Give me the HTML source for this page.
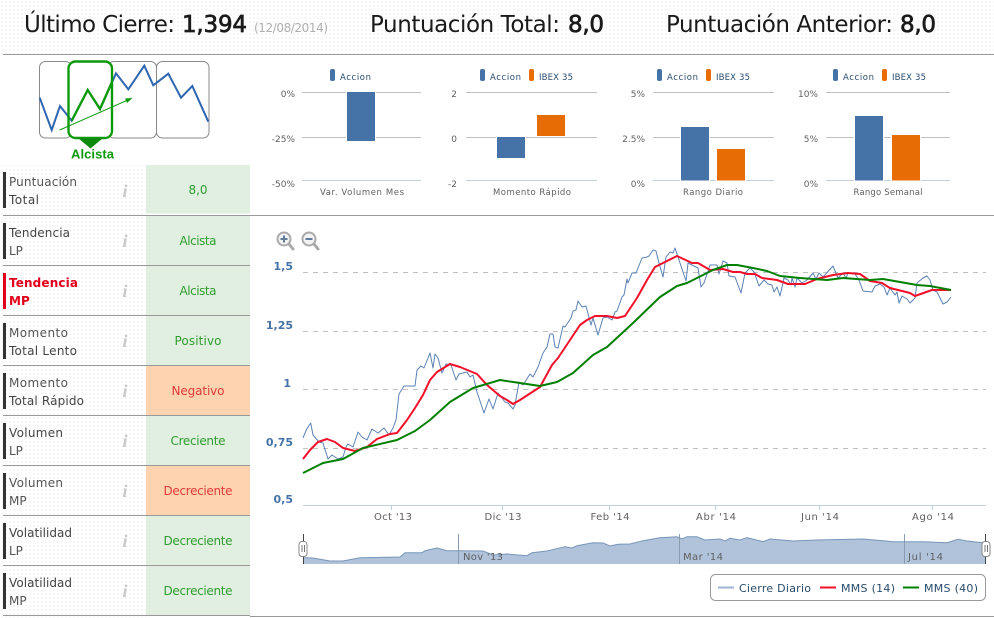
<!DOCTYPE html>
<html lang="es"><head><meta charset="utf-8"><title>Análisis</title>
<style>
html,body{margin:0;padding:0;background:#fff}
svg{display:block;font-family:"DejaVu Sans","Liberation Sans",sans-serif}
.h{font-size:23px;fill:#1a1a1a}
.hb{font-size:23px;fill:#1a1a1a;stroke:#1a1a1a;stroke-width:.7px}
.l{font-size:12px;fill:#555}
.ld{font-size:12px;fill:#444}
.v{font-size:12px;text-anchor:middle}
.g{fill:#2f9e2f}.r{fill:#e03a3a}
.i{font-family:"Liberation Serif",serif;font-style:italic;font-weight:bold;font-size:18px;fill:#c8c8c8;text-anchor:middle}
.ax{font-size:9px;fill:#606060;text-anchor:end}
.lg{font-size:8.5px;fill:#274b6d}
.t{font-size:8.5px;fill:#606060;text-anchor:middle}
.y{font-size:11px;font-weight:bold;fill:#4572a7;text-anchor:end}
.x{font-size:10px;fill:#606060;text-anchor:middle}
.n{font-size:10px;fill:#606060}
.lt{font-size:11px;fill:#274b6d}
.gl{stroke:#c0c0c0;stroke-width:1}
.ab{stroke:#c0d0e0;stroke-width:1}
.dg{stroke:#c0c0c0;stroke-width:1;stroke-dasharray:5 5}
.rl{stroke:#999;stroke-width:1}
</style></head>
<body>
<svg width="994" height="618" viewBox="0 0 994 618" xmlns="http://www.w3.org/2000/svg">
<defs>
<pattern id="d" width="4" height="4" patternUnits="userSpaceOnUse"><rect width="4" height="4" fill="#fff"/><rect x="1" y="1" width="2" height="2" fill="#f7f7f7"/></pattern>
</defs>
<rect width="994" height="618" fill="#fff"/>
<rect x="0" y="0" width="994" height="54" fill="url(#d)"/>
<rect x="0" y="165" width="146" height="453" fill="url(#d)"/>

<!-- header -->
<text x="24" y="32" class="h" textLength="151">Último Cierre:</text>
<text x="182" y="32" class="hb" textLength="65">1,394</text>
<text x="254" y="32" font-size="12" fill="#b0b0b0" textLength="74">(12/08/2014)</text>
<text x="370" y="32" class="h" textLength="190">Puntuación Total:</text>
<text x="568" y="32" class="hb" textLength="36">8,0</text>
<text x="666" y="32" class="h" textLength="227">Puntuación Anterior:</text>
<text x="900" y="32" class="hb" textLength="36">8,0</text>
<line x1="3" y1="54.5" x2="994" y2="54.5" class="rl"/>

<!-- mini trend -->
<g fill="#fff" stroke="#888" stroke-width="1">
<rect x="39.5" y="61.5" width="32" height="76.5" rx="6"/>
<rect x="108" y="61.5" width="48.5" height="76.5" rx="6"/>
<rect x="156.5" y="61.5" width="52.5" height="76.5" rx="6"/>
</g>
<rect x="68.5" y="61.5" width="43.5" height="76.5" rx="7" fill="#fff"/>
<polyline fill="none" stroke="#2f66b0" stroke-width="2" points="39.7,97.7 51.7,130 60,106 71.7,120.7 87.7,90 100,109 116,73.3 128.3,89.3 144.3,65.7 153.3,85.3 168.3,73.7 181,97.7 192.3,86 208.3,121.7"/>
<rect x="68.5" y="61.5" width="43.5" height="76.5" rx="7" fill="none" stroke="#0d9a0d" stroke-width="2.4"/>
<polyline fill="none" stroke="#0d9a0d" stroke-width="2.4" points="71.7,120.7 87.7,90 100,109 112,82"/>
<line x1="59.7" y1="130" x2="128" y2="100" stroke="#0d9a0d" stroke-width="1"/>
<polygon points="132.5,98 125,98.5 127,103" fill="#0d9a0d"/>
<polygon points="78,138 103,138 90.5,148.5" fill="#0d8a0d"/>
<text x="92.5" y="158.5" text-anchor="middle" font-family="Liberation Sans" font-weight="bold" font-size="13" fill="#0d9a0d" textLength="43">Alcista</text>

<!-- rows -->
<rect x="146" y="165" width="104" height="48.5" fill="#e0efe0"/>
<rect x="146" y="216" width="104" height="49" fill="#e0efe0"/>
<rect x="146" y="266" width="104" height="49" fill="#e0efe0"/>
<rect x="146" y="316" width="104" height="49" fill="#e0efe0"/>
<rect x="146" y="366" width="104" height="49" fill="#fdd3b0"/>
<rect x="146" y="416" width="104" height="49" fill="#e0efe0"/>
<rect x="146" y="466" width="104" height="49" fill="#fdd3b0"/>
<rect x="146" y="516" width="104" height="49" fill="#e0efe0"/>
<rect x="146" y="566" width="104" height="49" fill="#e0efe0"/>
<line x1="3" y1="215.5" x2="994" y2="215.5" class="rl"/>
<line x1="3" y1="265.5" x2="250" y2="265.5" class="rl"/>
<line x1="3" y1="315.5" x2="250" y2="315.5" class="rl"/>
<line x1="3" y1="365.5" x2="250" y2="365.5" class="rl"/>
<line x1="3" y1="415.5" x2="250" y2="415.5" class="rl"/>
<line x1="3" y1="465.5" x2="250" y2="465.5" class="rl"/>
<line x1="3" y1="515.5" x2="250" y2="515.5" class="rl"/>
<line x1="3" y1="565.5" x2="250" y2="565.5" class="rl"/>
<line x1="3" y1="615.5" x2="250" y2="615.5" class="rl"/>
<line x1="250" y1="616.5" x2="994" y2="616.5" class="rl"/>

<g fill="#333">
<rect x="3" y="172" width="3" height="36"/>
<rect x="3" y="223" width="3" height="36"/>
<rect x="3" y="273" width="3" height="36" fill="#e2001a"/>
<rect x="3" y="323" width="3" height="36"/>
<rect x="3" y="373" width="3" height="36"/>
<rect x="3" y="423" width="3" height="36"/>
<rect x="3" y="473" width="3" height="36"/>
<rect x="3" y="523" width="3" height="36"/>
<rect x="3" y="573" width="3" height="36"/>
</g>

<text x="9" y="186" class="l" textLength="68">Puntuación</text><text x="9" y="204" class="ld" textLength="30">Total</text>
<text x="9" y="237" class="ld" textLength="61">Tendencia</text><text x="9" y="255" class="l">LP</text>
<text x="9" y="287" font-size="12" font-weight="bold" fill="#e2001a" textLength="69">Tendencia</text><text x="9" y="305" font-size="12" font-weight="bold" fill="#e2001a">MP</text>
<text x="9" y="337" class="l" textLength="59">Momento</text><text x="9" y="355" class="ld" textLength="68">Total Lento</text>
<text x="9" y="387" class="l" textLength="59">Momento</text><text x="9" y="405" class="ld" textLength="75">Total Rápido</text>
<text x="9" y="437" class="ld" textLength="54">Volumen</text><text x="9" y="455" class="l">LP</text>
<text x="9" y="487" class="l" textLength="54">Volumen</text><text x="9" y="505" class="l">MP</text>
<text x="9" y="537" class="ld" textLength="63">Volatilidad</text><text x="9" y="555" class="l">LP</text>
<text x="9" y="587" class="ld" textLength="63">Volatilidad</text><text x="9" y="605" class="l">MP</text>

<text x="125" y="197" class="i">i</text>
<text x="125" y="247" class="i">i</text>
<text x="125" y="297" class="i">i</text>
<text x="125" y="347" class="i">i</text>
<text x="125" y="397" class="i">i</text>
<text x="125" y="447" class="i">i</text>
<text x="125" y="497" class="i">i</text>
<text x="125" y="547" class="i">i</text>
<text x="125" y="597" class="i">i</text>

<text x="198" y="194" class="v g">8,0</text>
<text x="198" y="245" class="v g" textLength="37">Alcista</text>
<text x="198" y="295" class="v g" textLength="37">Alcista</text>
<text x="198" y="345" class="v g" textLength="47">Positivo</text>
<text x="198" y="395" class="v r" textLength="53">Negativo</text>
<text x="198" y="445" class="v g" textLength="55">Creciente</text>
<text x="198" y="495" class="v r" textLength="69">Decreciente</text>
<text x="198" y="545" class="v g" textLength="69">Decreciente</text>
<text x="198" y="595" class="v g" textLength="69">Decreciente</text>

<!-- bar chart 1 -->
<line x1="302" y1="92.5" x2="421" y2="92.5" class="gl"/><line x1="302" y1="137.5" x2="421" y2="137.5" class="gl"/><line x1="302" y1="180.5" x2="421" y2="180.5" class="ab"/>
<rect x="346" y="91" width="30" height="51" fill="#fff"/><rect x="347" y="92" width="28" height="49" fill="#4572a7"/>
<text x="295" y="97" class="ax">0%</text><text x="295" y="142" class="ax">-25%</text><text x="295" y="187" class="ax">-50%</text>
<rect x="330" y="69" width="5" height="12" rx="2" fill="#4572a7"/><text x="340" y="80" class="lg" textLength="31">Accion</text>
<text x="362" y="195" class="t" textLength="84">Var. Volumen Mes</text>

<!-- bar chart 2 -->
<line x1="466" y1="92.5" x2="597" y2="92.5" class="gl"/><line x1="466" y1="137.5" x2="597" y2="137.5" class="gl"/><line x1="466" y1="180.5" x2="597" y2="180.5" class="ab"/>
<rect x="496" y="136" width="30" height="23" fill="#fff"/><rect x="497" y="137" width="28" height="21" fill="#4572a7"/>
<rect x="536" y="114" width="30" height="23" fill="#fff"/><rect x="537" y="115" width="28" height="21" fill="#e86c05"/>
<text x="457" y="97" class="ax">2</text><text x="457" y="142" class="ax">0</text><text x="457" y="187" class="ax">-2</text>
<rect x="480" y="69" width="5" height="12" rx="2" fill="#4572a7"/><text x="490" y="80" class="lg" textLength="31">Accion</text>
<rect x="529" y="69" width="5" height="12" rx="2" fill="#e86c05"/><text x="539" y="80" class="lg" textLength="34">IBEX 35</text>
<text x="532" y="195" class="t" textLength="78">Momento Rápido</text>

<!-- bar chart 3 -->
<line x1="653" y1="92.5" x2="774" y2="92.5" class="gl"/><line x1="653" y1="137.5" x2="774" y2="137.5" class="gl"/><line x1="653" y1="180.5" x2="774" y2="180.5" class="ab"/>
<rect x="680" y="126" width="30" height="55" fill="#fff"/><rect x="681" y="127" width="28" height="53.5" fill="#4572a7"/>
<rect x="716" y="148" width="30" height="33" fill="#fff"/><rect x="717" y="149" width="28" height="31.5" fill="#e86c05"/>
<text x="645" y="97" class="ax">5%</text><text x="645" y="142" class="ax">2.5%</text><text x="645" y="187" class="ax">0%</text>
<rect x="657" y="69" width="5" height="12" rx="2" fill="#4572a7"/><text x="667" y="80" class="lg" textLength="31">Accion</text>
<rect x="706" y="69" width="5" height="12" rx="2" fill="#e86c05"/><text x="716" y="80" class="lg" textLength="34">IBEX 35</text>
<text x="713" y="195" class="t" textLength="60">Rango Diario</text>

<!-- bar chart 4 -->
<line x1="826" y1="92.5" x2="950" y2="92.5" class="gl"/><line x1="826" y1="137.5" x2="950" y2="137.5" class="gl"/><line x1="826" y1="180.5" x2="950" y2="180.5" class="ab"/>
<rect x="854" y="115" width="30" height="66" fill="#fff"/><rect x="855" y="116" width="28" height="64.5" fill="#4572a7"/>
<rect x="891" y="134" width="30" height="47" fill="#fff"/><rect x="892" y="135" width="28" height="45.5" fill="#e86c05"/>
<text x="818" y="97" class="ax">10%</text><text x="818" y="142" class="ax">5%</text><text x="818" y="187" class="ax">0%</text>
<rect x="833" y="69" width="5" height="12" rx="2" fill="#4572a7"/><text x="843" y="80" class="lg" textLength="31">Accion</text>
<rect x="882" y="69" width="5" height="12" rx="2" fill="#e86c05"/><text x="892" y="80" class="lg" textLength="34">IBEX 35</text>
<text x="888" y="195" class="t" textLength="69">Rango Semanal</text>

<!-- zoom icons -->
<g>
<line x1="289" y1="244" x2="293" y2="249" stroke="#aaa" stroke-width="3" stroke-linecap="round"/>
<circle cx="284" cy="239" r="6.5" fill="#f2f2f2" stroke="#aaa" stroke-width="2"/>
<path d="M280.5 239h7M284 235.5v7" stroke="#5f7d9b" stroke-width="2" fill="none"/>
<line x1="314" y1="244" x2="318" y2="249" stroke="#aaa" stroke-width="3" stroke-linecap="round"/>
<circle cx="309" cy="239" r="6.5" fill="#f2f2f2" stroke="#aaa" stroke-width="2"/>
<path d="M305.5 239h7" stroke="#5f7d9b" stroke-width="2" fill="none"/>
</g>

<!-- main chart -->
<line x1="303" y1="272.5" x2="986" y2="272.5" class="dg"/>
<line x1="303" y1="331.5" x2="986" y2="331.5" class="dg"/>
<line x1="303" y1="389.5" x2="986" y2="389.5" class="dg"/>
<line x1="303" y1="448.5" x2="986" y2="448.5" class="dg"/>
<line x1="303" y1="505.5" x2="986" y2="505.5" class="ab"/>
<path d="M391.5 505v5M502.5 505v5M609.5 505v5M715.5 505v5M819.5 505v5M932.5 505v5" stroke="#c0d0e0" fill="none"/>
<text x="293" y="270" class="y">1,5</text><text x="293" y="329" class="y">1,25</text><text x="291" y="387" class="y">1</text><text x="293" y="446" class="y">0,75</text><text x="293" y="503" class="y">0,5</text>
<text x="393" y="520" class="x" textLength="38">Oct '13</text><text x="503" y="520" class="x" textLength="37">Dic '13</text><text x="610" y="520" class="x" textLength="39">Feb '14</text><text x="716" y="520" class="x" textLength="40">Abr '14</text><text x="820" y="520" class="x" textLength="38">Jun '14</text><text x="933" y="520" class="x" textLength="42">Ago '14</text>

<polyline fill="none" stroke="#5b82b5" stroke-width="1" stroke-linejoin="round" points="303,438 306.7,429 310.7,423 313,435 319,442 323,443 328,459 332,455 338,459 343,457 346,447 348,444 353,447 358,432 362,437 367,440 372,429 378,433 384,428 389,435 393,428 396,420 399,394 404,386 415,386 417,370 421,366 424,368 430,353 433,368 435,354 438,358 442,373 446,364 451,365 456,380 459,374 467,372 470,377 473,375 477,392 484,413 489,399 493,409 498,393 505,402 508,403 513,409 515,405 519,382 523,385 530,374 533,377 538,367 543,353 547,347 550,334 553,334 555,347 558,348 563,326 565,327 571,318 573,311 576,310 578,301 582,307 586,306 591,325 593,318 598,335 603,318 607,317 612,320 615,312 617,311 622,297 624,295 627,279 628,283 632,273 636,273 642,258 647,257 649,256 653,250 656,251 659,263 663,277 666,257 670,252 673,253 675,248 678,257 686,281 688,263 698,268 701,287 704,283 710,265 717,265 719,274 723,261 727,263 729,276 735,277 741,293 745,273 750,268 754,272 759,286 764,280 768,284 772,285 774,292 777,287 780,296 784,278 788,280 791,285 792,278 795,287 797,278 802,283 807,280 813,273 816,279 819,273 823,277 833,266 838,278 843,273 846,278 848,273 855,274 859,280 863,291 872,292 875,286 880,284 884,287 887,295 890,288 895,295 897,292 899,303 902,296 907,299 910,303 915,298 917,283 923,278 927,276 930,280 933,290 937,292 943,304 947,302 951,297"/>
<polyline fill="none" stroke="#f0102a" stroke-width="2" stroke-linejoin="round" points="303,459 310,450 318,442 327,439 335,442 343,448 355,451 367,447 377,439 390,434 397,433 407,420 415,408 423,395 430,380 437,372 450,364 460,367 477,374 487,385 500,396 507,400 513,404 520,400 540,387 552,365 558,358 580,325 587,320 595,316 607,316 617,318 625,316 637,298 647,280 655,267 663,263 677,256 692,263 698,263 710,270 723,269 733,272 740,272 747,274 755,274 762,278 777,280 788,284 805,284 817,279 833,275 848,273 860,274 870,281 882,283 890,288 910,293 915,296 932,290 951,290"/>
<polyline fill="none" stroke="#008000" stroke-width="2" stroke-linejoin="round" points="303,473 323,463 343,459 363,448 397,440 415,431 430,420 450,402 473,388 500,380 520,383 540,386 557,382 573,373 593,355 607,347 633,323 660,297 677,286 687,283 713,270 727,265 737,265 753,268 767,271 780,276 800,278 827,280 843,278 870,280 883,279 917,285 930,286 951,290"/>

<!-- navigator -->
<path d="M303,564 L303,557.7 313,558 330,561 343,561 360,557.7 400,557 405,552.7 422,552.7 425,550.7 437,548 447,550.7 460,550.7 483,551 493,555 507,554 527,555.7 532,552.7 547,551 565,546.7 572,548 577,545.7 593,542.7 603,543 610,546 618,544.3 630,544 643,540.7 660,537.7 677,536.7 682,539 687,536.7 697,536.7 705,540 720,539 725,541 730,538.3 740,540 747,537.7 763,541.7 770,539 793,541 817,540 863,539 893,541.7 923,541.7 947,542.7 958,539.3 967,541 985,543 985,564 Z" fill="#b0c3db"/>
<polyline fill="none" stroke="#7795b8" stroke-width="1" points="303,557.7 313,558 330,561 343,561 360,557.7 400,557 405,552.7 422,552.7 425,550.7 437,548 447,550.7 460,550.7 483,551 493,555 507,554 527,555.7 532,552.7 547,551 565,546.7 572,548 577,545.7 593,542.7 603,543 610,546 618,544.3 630,544 643,540.7 660,537.7 677,536.7 682,539 687,536.7 697,536.7 705,540 720,539 725,541 730,538.3 740,540 747,537.7 763,541.7 770,539 793,541 817,540 863,539 893,541.7 923,541.7 947,542.7 958,539.3 967,541 985,543"/>
<path d="M458.5 534v30M679.5 534v30M904.5 534v30" stroke="#8a9bb0" fill="none"/>
<text x="463" y="560" class="n" textLength="40">Nov '13</text><text x="683" y="560" class="n" textLength="40">Mar '14</text><text x="908" y="560" class="n" textLength="35">Jul '14</text>
<path d="M303.5 534v30M985.5 534v30" stroke="#444" fill="none"/>
<rect x="299" y="541.5" width="8" height="15" rx="3" fill="#fff" stroke="#888"/>
<path d="M302 545v7M304.5 545v7" stroke="#777" fill="none"/>
<rect x="982" y="541.5" width="8" height="15" rx="3" fill="#fff" stroke="#888"/>
<path d="M985 545v7M987.5 545v7" stroke="#777" fill="none"/>

<!-- legend -->
<rect x="710.5" y="574.5" width="275" height="26" rx="5" fill="#fff" stroke="#999"/>
<line x1="718" y1="587.5" x2="734" y2="587.5" stroke="#9cb3d4" stroke-width="2"/>
<text x="739" y="592" class="lt" textLength="72">Cierre Diario</text>
<line x1="820" y1="587.5" x2="836" y2="587.5" stroke="#f0102a" stroke-width="2"/>
<text x="841" y="592" class="lt" textLength="54">MMS (14)</text>
<line x1="903" y1="587.5" x2="919" y2="587.5" stroke="#008000" stroke-width="2"/>
<text x="924" y="592" class="lt" textLength="54">MMS (40)</text>
</svg>
</body></html>
